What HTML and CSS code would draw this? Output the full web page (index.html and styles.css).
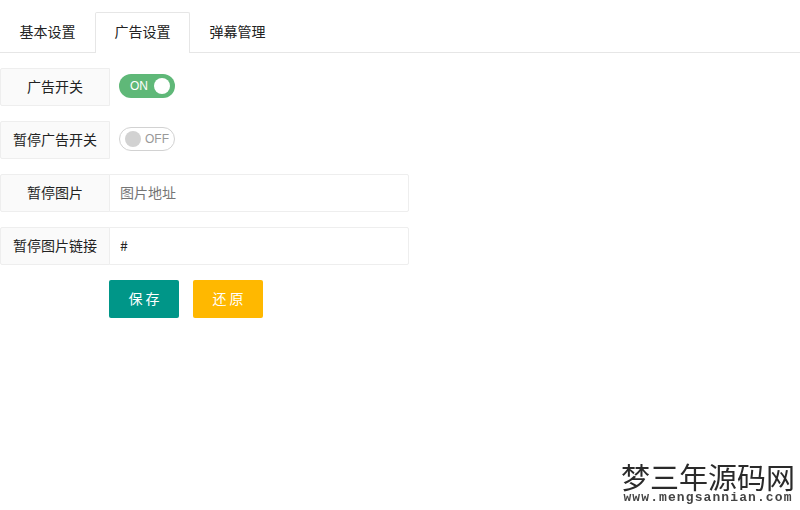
FILE: index.html
```html
<!DOCTYPE html>
<html lang="zh-CN">
<head>
<meta charset="utf-8">
<title>广告设置</title>
<link rel="stylesheet" href="styles.css">
</head>
<body>
<ul class="tabs">
  <li class="tab">基本设置</li>
  <li class="tab active">广告设置</li>
  <li class="tab">弹幕管理</li>
</ul>
<form class="form">
  <div class="row">
    <label class="label">广告开关</label>
    <div class="switch-cell"><span class="switch on"><em>ON</em><i></i></span></div>
  </div>
  <div class="row">
    <label class="label">暂停广告开关</label>
    <div class="switch-cell"><span class="switch off"><i></i><em>OFF</em></span></div>
  </div>
  <div class="row">
    <label class="label">暂停图片</label>
    <input class="input" type="text" placeholder="图片地址">
  </div>
  <div class="row">
    <label class="label">暂停图片链接</label>
    <input class="input" type="text" value="#">
  </div>
  <div class="actions">
    <button class="btn save" type="button">保 存</button>
    <button class="btn reset" type="button">还 原</button>
  </div>
</form>
<div class="mark">
  <div class="mark-cn">梦三年源码网</div>
  <div class="mark-en">www.mengsannian.com</div>
</div>
</body>
</html>
```
FILE: styles.css
```css
* { box-sizing: border-box; }
html, body { margin: 0; padding: 0; height: 510px; overflow: hidden; background: #fff; }
body {
  position: relative;
  font-family: "Noto Sans CJK SC", "Liberation Sans", sans-serif;
  font-size: 14px;
  color: #222;
}
.tabs {
  display: flex;
  list-style: none;
  margin: 12px 0 0;
  padding: 0;
  height: 41px;
  border-bottom: 1px solid #e6e6e6;
}
.tab {
  width: 95px;
  height: 41px;
  line-height: 36px;
  text-align: center;
  border: 1px solid transparent;
  border-bottom: 0;
}
.tab.active {
  background: #fff;
  border-color: #e6e6e6;
  border-radius: 2px 2px 0 0;
}
.form { display: flex; flex-direction: column; gap: 15px; margin-top: 15px; }
.row { display: flex; height: 38px; }
.label {
  flex: none;
  width: 110px;
  height: 38px;
  line-height: 34px;
  text-align: center;
  background: #fafafa;
  border: 1px solid #eee;
  border-radius: 2px 0 0 2px;
}
.switch-cell { display: flex; align-items: center; padding-left: 9px; margin-top: -3px; }
.switch {
  display: flex;
  align-items: center;
  width: 56px;
  height: 24px;
  border-radius: 12px;
  font-size: 12px;
  font-family: "Liberation Sans", sans-serif;
}
.switch em { font-style: normal; }
.switch i { display: block; border-radius: 50%; }
.switch.on { background: #5fb878; color: #fff; padding: 0 5px 0 11px; justify-content: space-between; }
.switch.on i { width: 16px; height: 16px; background: #fff; }
.switch.off { border: 1px solid #d2d2d2; color: #999; padding: 0 5px; justify-content: space-between; }
.switch.off i { width: 16px; height: 16px; background: #d2d2d2; }
.input {
  display: block;
  width: 300px;
  height: 38px;
  margin-left: -1px;
  padding: 0 0 2px 10px;
  font: inherit;
  color: #222;
  background: #fff;
  border: 1px solid #eee;
  border-radius: 0 2px 2px 0;
  outline: 0;
}
.input::placeholder { color: #757575; opacity: 1; }
.actions { display: flex; gap: 14px; padding-left: 109px; }
.btn {
  width: 70px;
  height: 38px;
  padding: 0 0 2px;
  border: 0;
  border-radius: 2px;
  color: #fff;
  font: inherit;
}
.save { background: #009688; }
.reset { background: #ffb800; }
.mark {
  position: absolute;
  right: 4px;
  bottom: 7px;
  width: 176px;
  text-align: center;
  color: #2a2a2a;
  filter: blur(0.4px);
}
.mark-cn { font-family: "Noto Sans CJK SC", sans-serif; font-size: 29px; line-height: 30px; white-space: nowrap; }
.mark-en { font-family: "Liberation Mono", monospace; font-size: 13px; line-height: 11px; margin-top: 1px; font-weight: 700; white-space: nowrap; letter-spacing: 1.1px; color: #444; }
```
